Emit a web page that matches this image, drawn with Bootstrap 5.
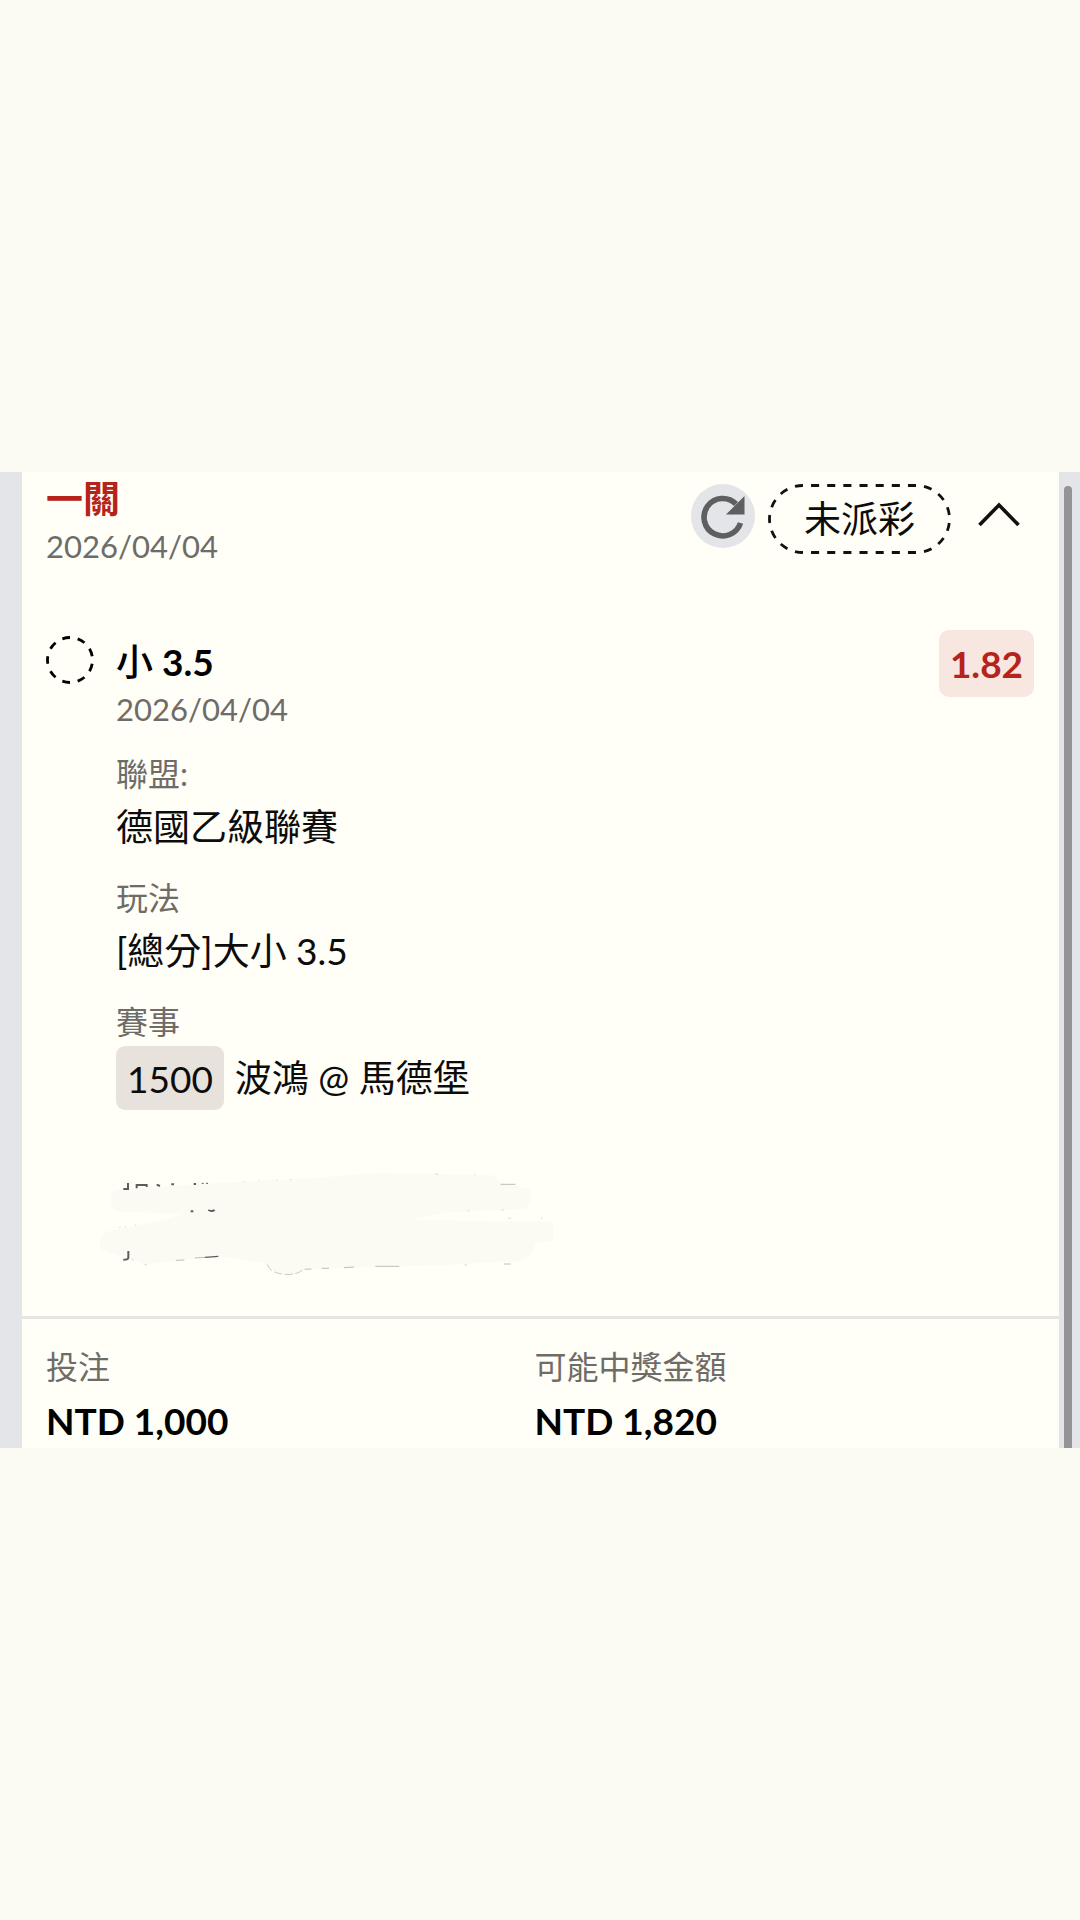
<!DOCTYPE html>
<html lang="zh-Hant">
<head>
<meta charset="utf-8">
<meta name="viewport" content="width=device-width, initial-scale=1">
<title>投注明細</title>
<link href="https://cdn.jsdelivr.net/npm/bootstrap@5.3.0/dist/css/bootstrap.min.css" rel="stylesheet">
<style>
body { background: #fbfbf3; color: #0c0c0c; font-family: Lato, "Noto Sans CJK TC", sans-serif; font-size: 37px; line-height: 58px; }
.slip-frame { background: #e4e5e8; padding-left: 22px; }
.slip-sheet { background: #fffef7; padding-top: 3px; }
.slip-rail { width: 21px; padding: 14px 8px 0 5px; }
.slip-thumb { background: #949496; border-radius: 4px 4px 0 0; }
.inset { padding-left: 24px; padding-right: 25px; }
.slip-title { color: #b6231b; font-size: 37px; font-weight: 700; line-height: 48px; }
.muted { color: #6d6c68; font-size: 32px; line-height: 48px; font-weight: 400; }
.date-line { font-size: 31px; line-height: 46px; padding-bottom: 2px; }
.strong-line { color: #000; font-size: 37px; font-weight: 700; line-height: 48px; }
.pick-side { font-weight: 500; }
.tools { padding-top: 9px; gap: 13px; }
.btn-round { width: 64px; height: 64px; background: #e4e5e8; }
.status-pill { width: 183px; height: 70px; line-height: 70px; }
.toggle { margin: 10px 12px 0 12px; width: 46px; }
.pick { margin-top: 59px; }
.pick-mark { width: 70px; padding-top: 6px; }
.pick-main { padding-top: 8px; }
.odds { background: #f7e7e0; color: #b6231b; border-radius: 10px; width: 95px; height: 67px; line-height: 68px; font-weight: 700; }
.field { margin-top: 16px; }
.field + .field { margin-top: 18px; }
.code-chip { background: #e7e2dc; border-radius: 9px; height: 64px; line-height: 66px; padding: 0 11px; }
.match { gap: 11px; line-height: 64px; }
.smudge { margin: 40px 0 16px 58px; }
.totals { border-top: 3px solid #e7e5df; padding: 24px 36px 3px 24px; }
.total-value { margin-top: 6px; }
</style>
</head>
<body>
<main class="min-vh-100 d-flex flex-column justify-content-center">
  <div class="slip-frame d-flex">
    <section class="slip-sheet flex-grow-1">
      <header class="inset d-flex justify-content-between align-items-start">
        <div>
          <h1 class="slip-title m-0">一關</h1>
          <div class="muted date-line">2026/04/04</div>
        </div>
        <div class="tools d-flex align-items-start">
          <button type="button" class="btn btn-round rounded-circle border-0 p-0 d-flex" aria-label="重新整理">
            <svg width="64" height="64" viewBox="0 0 64 64"><path d="M49.500 39A18.700 18.700 0 1 1 45 20" fill="none" stroke="#5e5f61" stroke-width="5.600"/><path d="M53.500 12v18.500H35z" fill="#5e5f61"/></svg>
          </button>
          <div class="status-pill position-relative text-center">
            <svg class="position-absolute top-0 start-0" width="183" height="70" viewBox="0 0 183 70"><path d="M1.500 35A33.500 33.500 0 0 1 35 1.500H148A33.500 33.500 0 0 1 148 68.500H35A33.500 33.500 0 0 1 1.500 35z" fill="none" stroke="#111" stroke-width="2.800" pathLength="432" stroke-dasharray="8 8" stroke-dashoffset="4"/></svg>
            未派彩
          </div>
          <button type="button" class="btn toggle border-0 p-0 d-flex" aria-label="收合">
            <svg width="46" height="32" viewBox="0 0 46 32"><path d="M3.500 31 23 11 42.500 31" fill="none" stroke="#111" stroke-width="3.600"/></svg>
          </button>
        </div>
      </header>

      <article class="inset pick d-flex align-items-start">
        <div class="pick-mark flex-shrink-0">
          <svg class="d-block" width="48" height="48" viewBox="0 0 48 48"><path d="M1.500 24A22.500 22.500 0 0 1 46.500 24A22.500 22.500 0 0 1 1.500 24" fill="none" stroke="#000" stroke-width="2.800" pathLength="144" stroke-dasharray="8 8" stroke-dashoffset="4"/></svg>
        </div>
        <div class="pick-main flex-grow-1">
          <h2 class="strong-line m-0"><span class="pick-side">小</span> 3.5</h2>
          <div class="muted date-line">2026/04/04</div>
          <div class="field"><div class="muted">聯盟:</div><div>德國乙級聯賽</div></div>
          <div class="field"><div class="muted">玩法</div><div>[總分]大小 3.5</div></div>
          <div class="field"><div class="muted">賽事</div>
            <div class="match d-flex"><span class="code-chip">1500</span><span>波鴻 @ 馬德堡</span></div>
          </div>
        </div>
        <div class="odds text-center flex-shrink-0">1.82</div>
      </article>

      <div class="smudge">
        <svg class="d-block" width="500" height="150" viewBox="0 0 1500 450" aria-hidden="true">
          <path d="M92 140Q95 118 140 118L400 100L700 84L900 68L1240 76L1262 98L1350 118Q1360 150 1335 178L1100 186L990 210L1415 215Q1425 240 1418 270L1365 282Q1362 318 1320 332L1100 345L900 350L670 358Q650 376 610 372Q565 366 560 340L420 318L195 343L150 328L65 300Q50 270 80 245L240 212L310 192L110 184Q92 178 92 140z" fill="#fbfbf4"/>
          <g fill="none" stroke="#5d5c59" stroke-width="6">
            <path d="M144 99v18h-14M170 115v-10h30v6"/>
            <path d="M230 104l10 4M274 103h8M341 102h7M332 184h8M385 180q10 6 19 0"/>
            <path d="M365 100h6M378 100h6" stroke-width="3"/>
            <path d="M145 303v20q0 6-15 6"/>
            <path d="M375 322l40-3" stroke-width="4"/>
          </g>
          <g fill="none" stroke="#bfbeb6" stroke-width="3">
            <path d="M288 331l25-1M345 324l30-2M674 358l20-1M725 355h22M792 353l30-2M886 349h72M1262 103h44M1272 342h20"/>
            <path d="M562 343q6 25 50 30q40 3 56-14" stroke="#cccbc3" stroke-dasharray="24 8"/>
            <path d="M490 95h4M535 92h4M588 90h4M630 88h4M1182 74h4M1065 72h10M1163 183h6M1263 180h8M1285 205h8M1385 202v6M117 232h4M135 230h4M164 225h4M156 325l4 7M193 344h8M1153 345h8" stroke="#dddcd3"/>
          </g>
        </svg>
      </div>

      <footer class="totals">
        <div class="row g-0">
          <div class="col-6"><div class="muted">投注</div><div class="strong-line total-value">NTD 1,000</div></div>
          <div class="col-6"><div class="muted">可能中獎金額</div><div class="strong-line total-value">NTD 1,820</div></div>
        </div>
      </footer>
    </section>
    <div class="slip-rail flex-shrink-0 d-flex"><div class="slip-thumb flex-grow-1"></div></div>
  </div>
</main>
<script src="https://cdn.jsdelivr.net/npm/bootstrap@5.3.0/dist/js/bootstrap.bundle.min.js"></script>
</body>
</html>
